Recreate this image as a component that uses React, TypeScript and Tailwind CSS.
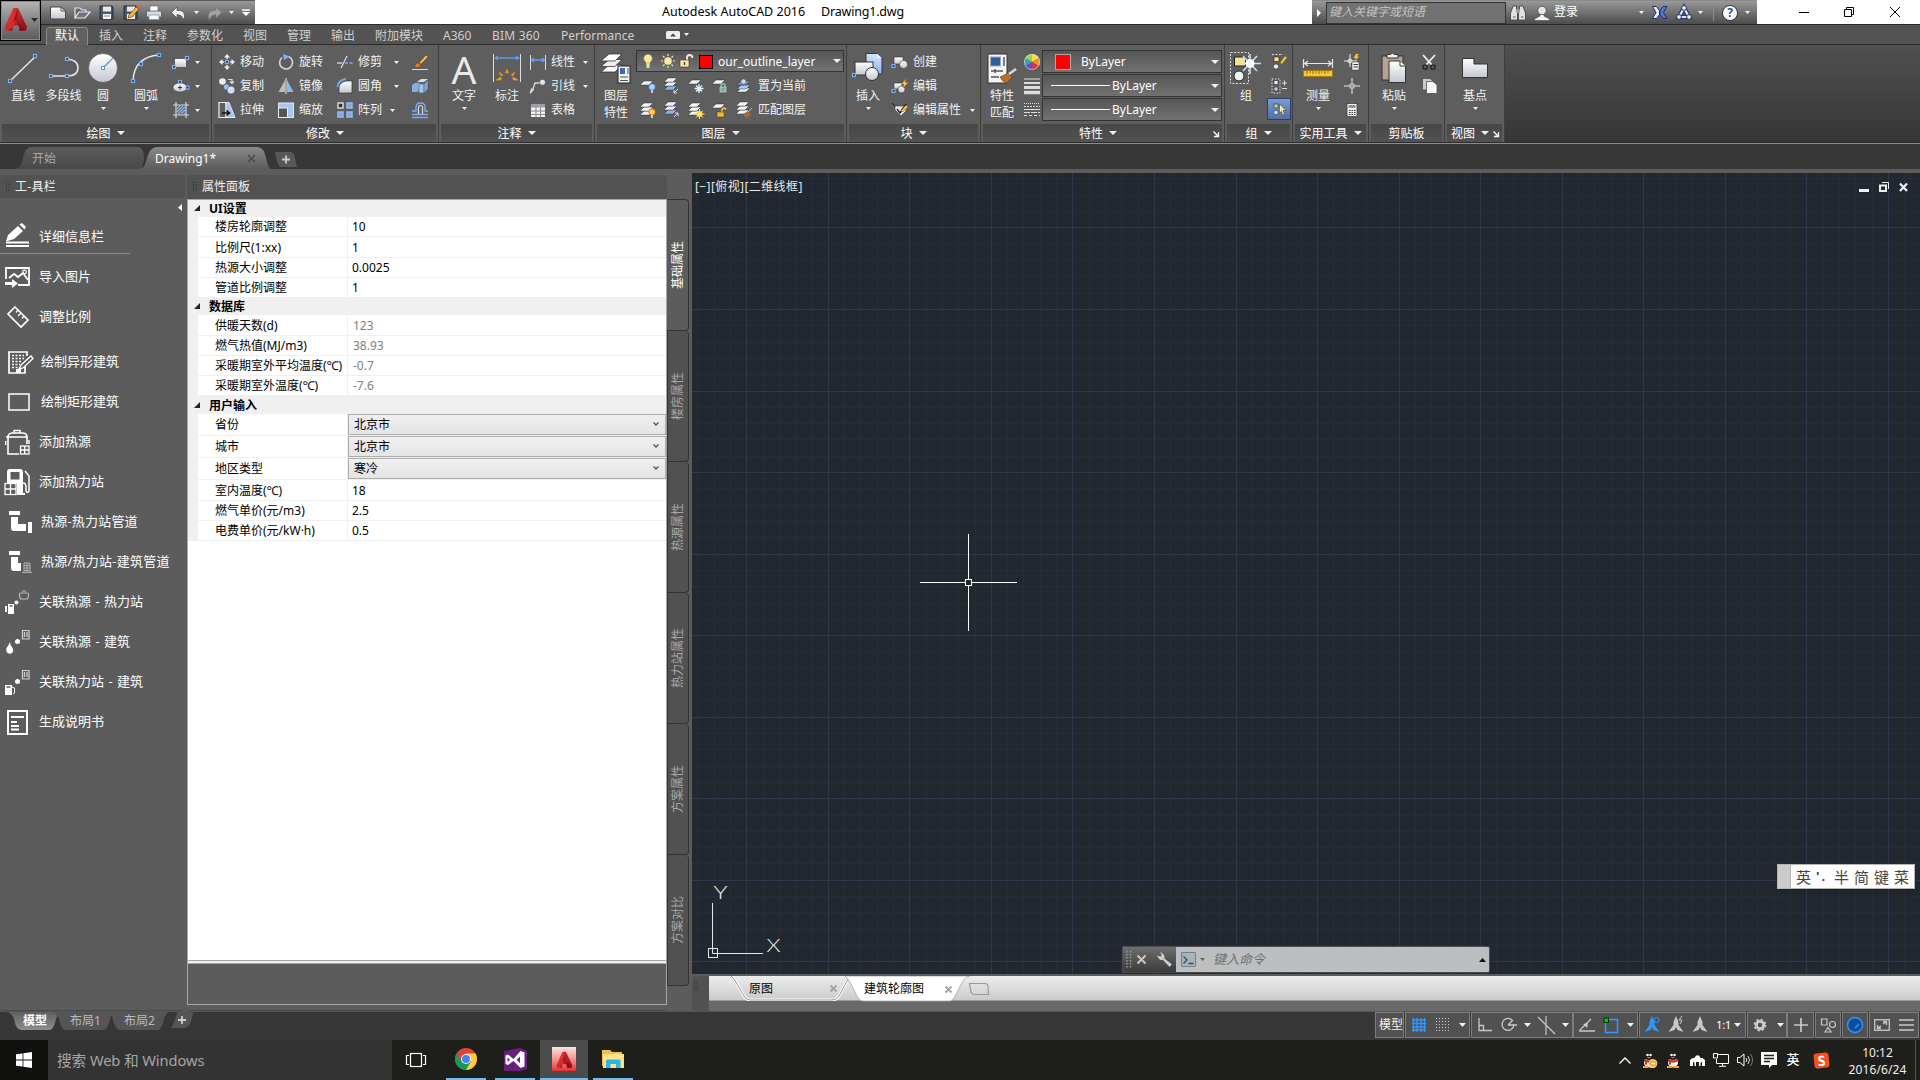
import React from "react";

type Kids = { children?: React.ReactNode };

/* ---------- shared primitives ---------- */

function Svg({ w, h, children }: { w: number; h: number } & Kids) {
  return (
    <svg width={w} height={h} viewBox={`0 0 ${w} ${h}`} fill="none" className="block shrink-0 overflow-visible">
      {children}
    </svg>
  );
}

function Caret({ s = 5, c = "#f0f0f0" }: { s?: number; c?: string }) {
  const h = Math.ceil(s / 2);
  return (
    <Svg w={s} h={h}>
      <path d={`M0 0H${s}L${s / 2} ${h}Z`} fill={c} />
    </Svg>
  );
}

function Cell({ cls, children }: { cls: string } & Kids) {
  return <div className={`flex h-full shrink-0 items-center justify-center ${cls}`}>{children}</div>;
}

const Node = ({ x, y }: { x: number; y: number }) => (
  <rect x={x - 1.5} y={y - 1.5} width="3" height="3" fill="#2d3c5c" stroke="#79aef8" strokeWidth="1.2" />
);

const Sheet = ({ x, y, f = "#f4f5f7" }: { x: number; y: number; f?: string }) => (
  <path d={`M${x + 4} ${y}H${x + 13}L${x + 9} ${y + 4}H${x}Z`} fill={f} stroke="#333" strokeWidth=".5" />
);

function Gradients() {
  return (
    <svg width="0" height="0" className="absolute">
      <defs>
        <linearGradient id="metal" x1="0" y1="0" x2="0" y2="1">
          <stop offset="0" stopColor="#ffffff" />
          <stop offset="1" stopColor="#c3c7d0" />
        </linearGradient>
        <linearGradient id="blueSheet" x1="0" y1="0" x2="0" y2="1">
          <stop offset="0" stopColor="#d5e6fb" />
          <stop offset="1" stopColor="#8fb4ea" />
        </linearGradient>
        <linearGradient id="tabIdle" x1="0" y1="0" x2="0" y2="1">
          <stop offset="0" stopColor="#5c5c5c" />
          <stop offset="1" stopColor="#484848" />
        </linearGradient>
        <linearGradient id="tabActive" x1="0" y1="0" x2="0" y2="1">
          <stop offset="0" stopColor="#8a8a8a" />
          <stop offset="1" stopColor="#5c5c5c" />
        </linearGradient>
        <linearGradient id="modelTab" x1="0" y1="0" x2="0" y2="1">
          <stop offset="0" stopColor="#606060" />
          <stop offset="1" stopColor="#8d8d8d" />
        </linearGradient>
        <linearGradient id="logoRed" x1="0" y1="0" x2="1" y2="1">
          <stop offset="0" stopColor="#e8383a" />
          <stop offset="1" stopColor="#8c0d12" />
        </linearGradient>
      </defs>
    </svg>
  );
}

/* ---------- title bar ---------- */

const AutocadA = ({ s }: { s: number }) => (
  <svg width={s} height={s} viewBox="0 0 24 24" className="block shrink-0">
    <path d="M9.5 1H14L23 20L22 23.5L15.5 24L15 19.5Q12 17 9 19.5L8.5 24L2 23.5L1 20Z" fill="url(#logoRed)" />
    <path d="M9.5 1L12.5 13L9 19.5L2 23.5L1 20Z" fill="#e23133" opacity=".7" />
    <path d="M14 1L12.5 13L1 20L9 15Z" fill="#7d0a10" opacity=".7" />
    <path d="M12.5 13L22 23.5L15.5 24L15 19.5Z" fill="#7d0a10" opacity=".6" />
  </svg>
);

const FloppyShape = () => (
  <>
    <path d="M1 1H13L14 2V14H1Z" fill="#4d5866" stroke="#232a33" />
    <rect x="4" y="1.5" width="8" height="5" fill="#e6e9ee" />
    <rect x="4" y="9" width="8" height="5" fill="#f4f5f7" />
    <path d="M5 11H11" stroke="#7a8799" />
  </>
);

function QuickAccess() {
  return (
    <div className="flex h-6 w-[255px] shrink-0 items-center border-t border-[#5a5a5a] bg-gradient-to-b from-[#999] to-[#505050] pl-[46px]">
      <Cell cls="w-6">
        <Svg w={16} h={14}><path d="M.5 1H11L15.5 5V13H.5Z" fill="url(#metal)" stroke="#444" /><path d="M11 1V5H15.5" stroke="#555" /></Svg>
      </Cell>
      <Cell cls="w-6">
        <Svg w={17} h={13}><path d="M1 12V2H6L8 4H12V6" fill="#5e6875" stroke="#e6e6e6" strokeWidth="1.2" /><path d="M1 12L5 6H16L11 12Z" fill="#6d7682" stroke="#e6e6e6" strokeWidth="1.2" /></Svg>
      </Cell>
      <Cell cls="w-6"><Svg w={15} h={15}><FloppyShape /></Svg></Cell>
      <Cell cls="w-6">
        <Svg w={15} h={15}><FloppyShape /><path d="M6 10L13 2L16 4L9 12L5 13Z" fill="#f3b94a" stroke="#6b4308" strokeWidth=".7" /><path d="M13 2L15 .5L17.500 2.500L16 4Z" fill="#e2564a" /></Svg>
      </Cell>
      <Cell cls="w-6">
        <Svg w={16} h={14}><rect x="4" y="0" width="8" height="6" fill="#fff" stroke="#666" strokeWidth=".6" /><rect x=".5" y="5" width="15" height="6" rx="1" fill="#d7dade" stroke="#555" strokeWidth=".8" /><rect x="3" y="9" width="10" height="4.500" fill="#f4f8ff" stroke="#7690b5" strokeWidth=".7" /></Svg>
      </Cell>
      <Cell cls="w-6">
        <Svg w={15} h={12}><path d="M6 0V3.500H9Q14 4 13.500 11.500H11.500Q11.500 8 6 7.500V11L.5 5.500Z" fill="#f1f3f5" stroke="#4a4a4a" strokeWidth=".6" /></Svg>
      </Cell>
      <Cell cls="w-[12px]"><Caret /></Cell>
      <Cell cls="w-6">
        <Svg w={15} h={12}><path d="M9 0V3.500H6Q1 4 1.500 11.500H3.500Q3.500 8 9 7.500V11L14.500 5.500Z" fill="#a3a3a3" stroke="#777" strokeWidth=".6" /></Svg>
      </Cell>
      <Cell cls="w-[10px]"><Caret /></Cell>
      <Cell cls="w-[20px]"><Svg w={8} h={7}><path d="M0 1H8" stroke="#fff" strokeWidth="1.500" /><path d="M0 3H8L4 7Z" fill="#fff" /></Svg></Cell>
    </div>
  );
}

function InfoCenter() {
  return (
    <div className="flex h-6 w-[445px] shrink-0 items-center border-t border-[#8a8a8a] bg-gradient-to-b from-[#999] to-[#4c4c4c]">
      <Cell cls="w-[14px]"><Svg w={4} h={8}><path d="M0 0L4 4L0 8Z" fill="#fff" /></Svg></Cell>
      <div className="flex h-[22px] w-[180px] items-center border border-[#333] bg-[#727272] pl-[2px] text-[12px] italic text-[#c4c4c4]">键入关键字或短语</div>
      <Cell cls="w-[24px]">
        <Svg w={16} h={15}><path d="M3 1H6.500V4L7.500 8V15H.5V8L2 4ZM9.500 1H13L14 4L15.500 8V15H8.500V8L9.500 4Z" fill="#dfe2e6" stroke="#3a3a3a" strokeWidth=".8" /><path d="M6.500 4H9.500V8H6.500Z" fill="#9aa0a8" /><path d="M3 12H5.500M11 12H13.500" stroke="#555" /></Svg>
      </Cell>
      <Cell cls="w-[23px]">
        <Svg w={16} h={16}><circle cx="8" cy="5.500" r="4.300" fill="#e3e5e8" stroke="#444" strokeWidth=".8" /><path d="M6 9.500H10V11L15.500 14V15.500H.5V14L6 11Z" fill="#f3f3f3" stroke="#444" strokeWidth=".6" /></Svg>
      </Cell>
      <div className="ml-px w-[82px] text-[12px] text-white">登录</div>
      <Cell cls="w-[10px]"><Caret /></Cell>
      <Cell cls="w-[27px]">
        <Svg w={16} h={13}><path d="M.5 .5H4.500L7.500 4.500V8.500L4.500 12.500H.5L4 6.500Z" fill="#e8ecf5" stroke="#1d2f6b" /><path d="M15 .5H11L8 4.500V8.500L11 12.500H15L11.500 6.500Z" fill="#4f78d8" stroke="#1d2f6b" /></Svg>
      </Cell>
      <Cell cls="w-[22px]">
        <Svg w={16} h={15}><path d="M8 3L3 12H13Z" stroke="#28336b" strokeWidth="4.500" /><path d="M8 3L3 12H13Z" stroke="#e3e6ef" strokeWidth="2.200" /><circle cx="8" cy="3" r="2.400" fill="#eef" stroke="#28336b" /><circle cx="3" cy="12" r="2.400" fill="#eef" stroke="#28336b" /><circle cx="13" cy="12" r="2.400" fill="#eef" stroke="#28336b" /></Svg>
      </Cell>
      <Cell cls="w-[10px]"><Caret /></Cell>
      <div className="mx-[8px] h-[17px] w-px bg-[#8c8c8c]" />
      <div className="flex size-4 shrink-0 items-center justify-center rounded-full border border-[#333] bg-white text-[12px] font-bold leading-none text-[#1d4fbf]">?</div>
      <Cell cls="w-[18px]"><Caret /></Cell>
    </div>
  );
}

function TitleBar() {
  return (
    <div className="flex h-6 w-full bg-white">
      <QuickAccess />
      <div className="flex h-[23px] grow items-center pl-[407px]">
        <span className="whitespace-pre text-[12.500px] text-black">Autodesk AutoCAD 2016</span>
        <span className="ml-[16px] text-[12.500px] tracking-[-.2px] text-black">Drawing1.dwg</span>
      </div>
      <InfoCenter />
      <div className="flex h-[23px] w-[163px] items-center text-black">
        <div className="ml-[42px]"><Svg w={10} h={10}><path d="M0 5.500H10" stroke="#000" /></Svg></div>
        <div className="ml-[35px]"><Svg w={10} h={10}><path d="M.5 2.500H7.500V9.500H.5ZM2.500 2.500V.5H9.500V7.500H7.500" stroke="#000" /></Svg></div>
        <div className="ml-[36px]"><Svg w={10} h={10}><path d="M0 0L10 10M10 0L0 10" stroke="#000" /></Svg></div>
      </div>
    </div>
  );
}

/* ---------- ribbon tabs ---------- */

const ribbonTabs: { label: string; cls: string }[] = [
  { label: "插入", cls: "w-[44px]" },
  { label: "注释", cls: "w-[44px]" },
  { label: "参数化", cls: "w-[56px]" },
  { label: "视图", cls: "w-[44px]" },
  { label: "管理", cls: "w-[44px]" },
  { label: "输出", cls: "w-[44px]" },
  { label: "附加模块", cls: "w-[68px]" },
  { label: "A360", cls: "w-[49px]" },
  { label: "BIM 360", cls: "w-[69px] tracking-[.2px]" },
  { label: "Performance", cls: "w-[105px]" },
];

function RibbonTabs() {
  return (
    <div className="flex h-[21px] w-full items-end border-y border-[#2a2a2a] bg-[#535353] pl-[46px] text-[12px] text-[#cfcfcf]">
      <div className="-mb-px flex h-[18px] w-[42px] items-center justify-center rounded-t-sm border border-b-0 border-[#8c8c8c] bg-[#606060] text-white">默认</div>
      <div className="ml-[11px] flex h-[19px] items-center">
        {ribbonTabs.map((t) => (
          <div key={t.label} className={`shrink-0 whitespace-nowrap pt-[3px] ${t.cls}`}>{t.label}</div>
        ))}
        <Svg w={14} h={8}><rect width="14" height="8" rx="1.500" fill="#ececec" /><path d="M4 5.500H10L7 2.500Z" fill="#444" /></Svg>
        <div className="ml-[4px]"><Caret /></div>
      </div>
    </div>
  );
}

/* ---------- ribbon building blocks ---------- */

function Panel({ w, title, caret = true, launcher = false, children }: { w: string; title: string; caret?: boolean; launcher?: boolean } & Kids) {
  return (
    <div className={`flex h-full shrink-0 flex-col border-r border-[#3f3f3f] bg-[#5e5e5e] ${w}`}>
      <div className="flex h-[79px] pt-[5px]">{children}</div>
      <div className="mx-[2px] flex h-[18px] items-center bg-gradient-to-b from-[#474747] to-[#525252] text-[12px] text-white">
        <div className="flex grow items-center justify-center gap-[6px]">
          <span className="pt-[2px]">{title}</span>
          {caret && <Caret s={8} />}
        </div>
        {launcher && (
          <div className="mr-[3px] mt-[2px]"><Svg w={6} h={6}><path d="M.5 .5L5 5M5.500 1V5.500H1" stroke="#fff" strokeWidth="1.300" /></Svg></div>
        )}
      </div>
    </div>
  );
}

function Big({ w, label, label2, caret = false, children }: { w: string; label: string; label2?: string; caret?: boolean } & Kids) {
  return (
    <div className={`flex shrink-0 flex-col items-center text-[12px] leading-[17px] text-[#f2f2f2] ${w}`}>
      <div className="flex h-[36px] w-full items-center justify-center">{children}</div>
      <div className="mt-px whitespace-nowrap">{label}</div>
      {label2 && <div className="whitespace-nowrap">{label2}</div>}
      {caret && <div className="mt-[3px]"><Caret /></div>}
    </div>
  );
}

function Row({ label, caret = "", children }: { label?: string; caret?: string } & Kids) {
  return (
    <div className="flex h-6 items-center text-[12px] text-[#f2f2f2]">
      <div className="flex w-[18px] shrink-0 items-center justify-center">{children}</div>
      {label && <div className="ml-[4px] whitespace-nowrap pt-px">{label}</div>}
      {caret && <div className={caret}><Caret /></div>}
    </div>
  );
}

const PanelDraw = () => (
  <Panel w="w-[212px]" title="绘图">
    <Big w="w-[46px]" label="直线">
      <Svg w={30} h={30}><path d="M2 28L28 3" stroke="#e8e8e8" strokeWidth="1.500" /><Node x={2} y={28} /><Node x={27} y={3} /></Svg>
    </Big>
    <Big w="w-[35px]" label="多段线">
      <Svg w={30} h={22}><path d="M2 19H18Q29 19 29 10.500Q29 3 18 2" stroke="#e8e8e8" strokeWidth="1.500" /><Node x={2} y={19} /><Node x={18} y={19} /><Node x={18} y={2} /></Svg>
    </Big>
    <Big w="w-[44px]" label="圆" caret>
      <Svg w={30} h={30}><circle cx="15" cy="15" r="14.500" fill="url(#metal)" stroke="#444" strokeWidth=".6" /><path d="M15 15L25 5" stroke="#5b95e8" strokeWidth="1.200" /><rect x="13.500" y="13.500" width="3" height="3" fill="#fff" stroke="#5b95e8" /></Svg>
    </Big>
    <Big w="w-[42px]" label="圆弧" caret>
      <Svg w={30} h={30}><path d="M2 28Q3 4 28 2" stroke="#e8e8e8" strokeWidth="1.500" /><Node x={2} y={28} /><Node x={10} y={11} /><Node x={28} y={2} /></Svg>
    </Big>
    <div className="ml-[5px]">
      <Row caret="ml-[5px]"><Svg w={16} h={13}><rect x="1.500" y="2.500" width="12" height="9" fill="url(#metal)" stroke="#333" strokeWidth=".6" /><Node x={1} y={11} /><Node x={14} y={2} /></Svg></Row>
      <Row caret="ml-[5px]"><Svg w={16} h={13}><ellipse cx="7" cy="7.500" rx="7" ry="4.500" fill="url(#metal)" stroke="#333" strokeWidth=".6" /><path d="M7 5.500V9.500M5 7.500H9" stroke="#333" /><Node x={7} y={2} /><Node x={14.500} y={7.500} /></Svg></Row>
      <Row caret="ml-[5px]"><Svg w={16} h={16}><path d="M3 0V16M0 3H16M0 13H16M13 0V16" stroke="#d8d8d8" strokeWidth="1.200" /><path d="M4 7L7 4M4 10L10 4M5 12L12 5M8 12L12 8M11 12.500L12 11" stroke="#8bb6f5" strokeWidth="1.200" /></Svg></Row>
    </div>
  </Panel>
);

const PanelModify = () => (
  <Panel w="w-[227px]" title="修改">
    <div className="ml-[6px] w-[58px]">
      <Row label="移动"><Svg w={16} h={16}><path d="M8 0L11 3.500H5ZM8 16L11 12.500H5ZM0 8L3.500 5V11ZM16 8L12.500 5V11Z" fill="#eee" /><path d="M8 3V5M8 11V13M3 8H5M11 8H13" stroke="#eee" strokeWidth="1.500" /><Node x={8} y={8} /></Svg></Row>
      <Row label="复制"><Svg w={16} h={16}><circle cx="3.500" cy="3.500" r="3.300" fill="#eee" /><circle cx="7.500" cy="9" r="3" fill="#a9c8f5" stroke="#444" strokeWidth=".6" /><circle cx="12" cy="12" r="4" fill="#cfe0f8" stroke="#444" strokeWidth=".6" /><path d="M9 1.500H13V5M11 3.500L13 5.500L15 3.500" stroke="#ddd" strokeWidth="1.200" /></Svg></Row>
      <Row label="拉伸"><Svg w={16} h={16}><path d="M0 .5H7V15.500H0Z" stroke="#eee" strokeWidth="1.200" /><path d="M7 .5H10L16 15.500H7Z" fill="#a9c4ea" stroke="#dfe9f8" /><path d="M3 11H10M7.500 8.500L10.500 11L7.500 13.500" stroke="#111" strokeWidth="1.600" /></Svg></Row>
    </div>
    <div className="w-[60px] pl-px">
      <Row label="旋转"><Svg w={16} h={16}><path d="M4 3.500A6.500 6.500 0 1 0 10.500 2.500" stroke="#d8d8d8" strokeWidth="1.600" /><path d="M5 0L12 2.500L6 6Z" fill="#7db0f8" /></Svg></Row>
      <Row label="镜像"><Svg w={16} h={16}><path d="M7 2V14H.5Z" fill="#b9bcc2" /><path d="M9 2V14H15.500Z" fill="#8fb6ee" /><path d="M8 0V16" stroke="#eee" /></Svg></Row>
      <Row label="缩放"><Svg w={16} h={16}><rect x=".5" y="1" width="15" height="14.500" fill="#a9c6f1" stroke="#dfe9f8" /><path d="M.5 6H9.500V15.500H.5Z" fill="#555" stroke="#eee" /></Svg></Row>
    </div>
    <div className="w-[74px]">
      <Row label="修剪" caret="ml-[12px]"><Svg w={16} h={14}><path d="M0 8H5" stroke="#ddd" strokeWidth="1.300" /><path d="M8 8H16" stroke="#79aef8" strokeWidth="1.300" strokeDasharray="3 1.500" /><path d="M4 13L10 1" stroke="#ddd" strokeWidth="1.300" /></Svg></Row>
      <Row label="圆角" caret="ml-[12px]"><Svg w={16} h={16}><path d="M2 15V9Q3 4 9 3H15V15Z" fill="url(#metal)" stroke="#333" strokeWidth=".7" /><path d="M.5 9Q1 2 9 1" stroke="#6fa6f5" strokeWidth="1.800" /></Svg></Row>
      <Row label="阵列" caret="ml-[8px]"><Svg w={16} h={16}><rect x="1" y="1" width="5" height="5" fill="#333" stroke="#eee" strokeWidth="1.300" /><path d="M10 1H15V6H10ZM1 10H6V15H1ZM10 10H15V15H10Z" fill="#8aa3cf" stroke="#8fbcff" strokeWidth="1.500" /></Svg></Row>
    </div>
    <div className="ml-px">
      <Row><Svg w={16} h={16}><path d="M0 15.500H16" stroke="#ddd" /><path d="M7 9L14 1L16 3L9 10Z" fill="#f0c350" stroke="#5a3a08" strokeWidth=".5" /><path d="M3 14Q2 10 6 8.500L9 11Q8 14 3 14Z" fill="#e07820" stroke="#5a2a08" strokeWidth=".5" /></Svg></Row>
      <Row><Svg w={16} h={14}><path d="M0 6L3 4H8V11L5 13H0Z" fill="#86aee0" /><path d="M5 3L9 0H16L12 3Z" fill="#cfe0f5" /><path d="M7 5H12V14H7Z" fill="#a4c3ea" stroke="#555" strokeWidth=".5" /><path d="M12 5L16 1V10L12 14Z" fill="#7fa6dc" stroke="#555" strokeWidth=".5" /></Svg></Row>
      <Row><Svg w={16} h={16}><path d="M0 15.500H16" stroke="#79aef8" strokeWidth="1.400" /><path d="M0 12.500H16M0 9H4V5Q4 1 8.500 1Q13 1 13 5V9H16" stroke="#79aef8" strokeWidth="1.300" /><path d="M6.500 12V5.500Q6.500 3.500 8.500 3.500Q10.500 3.500 10.500 5.500V12" stroke="#ddd" strokeWidth="1.200" /></Svg></Row>
    </div>
  </Panel>
);

const PanelAnnotate = () => (
  <Panel w="w-[156px]" title="注释">
    <Big w="w-[50px]" label="文字" caret>
      <span className="mt-[2px] text-[39px] leading-[36px] text-[#e9e9e9]">A</span>
    </Big>
    <Big w="w-[36px]" label="标注">
      <Svg w={28} h={30}><path d="M.5 1V29M27.500 1V29" stroke="#ddd" /><path d="M2 5H26" stroke="#5f9ff5" strokeWidth="1.400" /><path d="M1 5L5 2.500V7.500ZM27 5L23 2.500V7.500Z" fill="#5f9ff5" /><path d="M14 16L15.500 20H12.500ZM6 19L10 22L8 23ZM22 19L18 22L20 23ZM3 27L8 24V27ZM25 27L20 24V27Z" fill="#f7c33c" stroke="#e07b1b" strokeWidth=".9" /></Svg>
    </Big>
    <div className="ml-[4px]">
      <Row label="线性" caret="ml-[8px]"><Svg w={16} h={15}><path d="M.5 0V15M15.500 0V15" stroke="#ddd" /><path d="M1 5H15M4 3L1.500 5L4 7M12 3L14.500 5L12 7" stroke="#5f9ff5" strokeWidth="1.400" /></Svg></Row>
      <Row label="引线" caret="ml-[8px]"><Svg w={16} h={15}><path d="M0 14L3 10L5 4H10" stroke="#ddd" strokeWidth="1.300" /><path d="M0 15L1 9L4 11Z" fill="#ddd" /><circle cx="12.500" cy="3.500" r="3" fill="url(#metal)" stroke="#333" strokeWidth=".5" /></Svg></Row>
      <Row label="表格"><Svg w={16} h={15}><rect x=".5" y=".5" width="15" height="14" fill="#f2f2f2" stroke="#333" strokeWidth=".6" /><rect x="1" y="1" width="14" height="3.500" fill="#9aa0a8" /><path d="M1 8H15M1 11.500H15M6 4V14M10.500 4V14" stroke="#8a8a8a" /></Svg></Row>
    </div>
  </Panel>
);

const LayerRow = ({ icons, label }: { icons: React.ReactNode[]; label: string }) => (
  <div className="flex h-6 items-center text-[12px] text-[#f2f2f2]">
    {icons.map((n, i) => (
      <div key={i} className="flex w-6 justify-center">{n}</div>
    ))}
    <div className="ml-[2px] whitespace-nowrap pt-px">{label}</div>
  </div>
);

const PanelLayers = () => (
  <Panel w="w-[252px]" title="图层">
    <Big w="w-[42px]" label="图层" label2="特性">
      <Svg w={30} h={30}>
        <path d="M8 12H21L14 19H0Z" fill="#fff" stroke="#333" strokeWidth=".8" />
        <path d="M8 6.500H21L14 13.500H0Z" fill="#eee" stroke="#333" strokeWidth=".8" />
        <path d="M8 1H21L14 8H0Z" fill="#fff" stroke="#333" strokeWidth=".8" />
        <rect x="17" y="13" width="12" height="17" fill="#f2f2f2" stroke="#222" />
        <rect x="19" y="15" width="5" height="6" fill="#3c6bb0" /><path d="M27 15V21M19 24H27M19 27.500H27" stroke="#555" />
      </Svg>
    </Big>
    <div className="-ml-px">
      <div className="mb-[2px] flex h-[22px] w-[208px] items-center border border-[#333] bg-gradient-to-b from-[#555] to-[#737373] text-[12px] text-white">
        <Cell cls="w-[22px]"><Svg w={10} h={15}><circle cx="5" cy="4.500" r="4.300" fill="#fbe7a0" stroke="#8b7a3a" strokeWidth=".6" /><path d="M3 8H7V11H3Z" fill="#e8cf80" /><path d="M3.500 11H6.500V14H3.500Z" fill="#ddd" /></Svg></Cell>
        <Cell cls="w-[17px]"><Svg w={14} h={14}><circle cx="7" cy="7" r="3.800" fill="#fbe7a0" /><path d="M7 0V2M7 12V14M0 7H2M12 7H14M2 2L3.500 3.500M12 12L10.500 10.500M2 12L3.500 10.500M12 2L10.500 3.500" stroke="#f3e6b8" strokeWidth="1.200" /></Svg></Cell>
        <Cell cls="w-[20px]"><Svg w={15} h={14}><path d="M8 6V3.500Q8 1 10.500 1Q13.500 1 13.500 4" stroke="#f5efd0" strokeWidth="1.800" /><rect x="1" y="6" width="9" height="7" fill="#fbe9a6" stroke="#333" strokeWidth=".6" /><path d="M5.500 8V11" stroke="#333" strokeWidth="1.300" /></Svg></Cell>
        <div className="ml-[3px] mt-[2px] size-[14px] border border-black bg-[#f00]" />
        <span className="ml-[5px] grow pt-[2px]">our_outline_layer</span>
        <div className="mr-[2px]"><Caret s={8} /></div>
      </div>
      <LayerRow
        label="置为当前"
        icons={[
          <Svg w={16} h={14}><Sheet x={0} y={2} /><circle cx="12" cy="8" r="3.200" fill="#a5d3f8" stroke="#3d7fc0" strokeWidth=".7" /><path d="M12 11V14" stroke="#ccc" strokeWidth="2" /></Svg>,
          <Svg w={16} h={16}><Sheet x={0} y={8} f="#8cb7f2" /><Sheet x={0} y={4} /><Sheet x={0} y={0} /><path d="M14 11L10 15M10 12V15H13" stroke="#ddd" /></Svg>,
          <Svg w={16} h={14}><Sheet x={0} y={1} /><path d="M11 5V14M6.500 9.500H15.500M8 6.500L14 12.500M14 6.500L8 12.500" stroke="#dff0ff" strokeWidth="1.300" /></Svg>,
          <Svg w={16} h={14}><Sheet x={0} y={1} /><path d="M9 8V6Q11 3.500 13 6V8" stroke="#9dbcc0" strokeWidth="1.300" /><rect x="8" y="8" width="6" height="5" fill="#7fb0a8" stroke="#ddd" strokeWidth=".6" /></Svg>,
          <Svg w={16} h={16}><Sheet x={1} y={10} /><Sheet x={1} y={7} f="#a9cdf5" /><Sheet x={1} y={3} f="#6f9fe0" /><circle cx="7.500" cy="3.500" r="2.600" fill="#ddd" stroke="#444" strokeWidth=".6" /></Svg>,
        ]}
      />
      <LayerRow
        label="匹配图层"
        icons={[
          <Svg w={16} h={15}><Sheet x={0} y={8} /><Sheet x={0} y={4} /><Sheet x={0} y={0} /><circle cx="12" cy="9" r="3.200" fill="#ffd257" stroke="#e0701a" strokeWidth="1" /><path d="M12 12V15" stroke="#ccc" strokeWidth="2" /></Svg>,
          <Svg w={16} h={16}><Sheet x={0} y={8} f="#8cb7f2" /><Sheet x={0} y={4} /><Sheet x={0} y={0} /><path d="M10 15L14 11M11 11H14V14" stroke="#ddd" /></Svg>,
          <Svg w={16} h={15}><Sheet x={0} y={8} /><Sheet x={0} y={4} /><Sheet x={0} y={0} /><circle cx="11.500" cy="11" r="3" fill="#ffe24a" /><path d="M11.500 6V16M6.500 11H16.500M8 7.500L15 14.500M15 7.500L8 14.500" stroke="#ffe24a" /></Svg>,
          <Svg w={16} h={14}><Sheet x={0} y={1} /><path d="M10 9V6.500Q12 3.500 14 6.500" stroke="#ffc94a" strokeWidth="1.400" /><rect x="5" y="9" width="7" height="5" fill="#f2b632" stroke="#6a4708" strokeWidth=".6" /></Svg>,
          <Svg w={16} h={16}><Sheet x={0} y={8} /><Sheet x={0} y={4} /><Sheet x={0} y={0} /><path d="M7 12L12 9L15 12L11 16Q8 15 7 12Z" fill="#a9683a" /><path d="M12 10L16 6" stroke="#bbb" /></Svg>,
        ]}
      />
    </div>
  </Panel>
);

const PanelBlock = () => (
  <Panel w="w-[134px]" title="块">
    <Big w="w-[42px]" label="插入" caret>
      <Svg w={32} h={30}><path d="M14 .5H25L30 5V21H14Z" fill="url(#blueSheet)" stroke="#333" /><path d="M25 .5V5H30" fill="#eef" /><rect x="3" y="9" width="18" height="13" fill="url(#metal)" stroke="#333" /><circle cx="20" cy="21" r="6.500" fill="url(#metal)" stroke="#333" /><Node x={2} y={22} /></Svg>
    </Big>
    <div className="ml-[2px]">
      <Row label="创建"><Svg w={16} h={13}><rect x="2" y="1" width="9" height="7" fill="url(#metal)" stroke="#333" strokeWidth=".6" /><circle cx="11.500" cy="8.500" r="4" fill="url(#metal)" stroke="#333" strokeWidth=".6" /><Node x={1.500} y={10} /></Svg></Row>
      <Row label="编辑"><Svg w={16} h={14}><rect x="2" y="4" width="8" height="6" fill="url(#metal)" stroke="#333" strokeWidth=".6" /><circle cx="9.500" cy="10.500" r="3.500" fill="url(#metal)" stroke="#333" strokeWidth=".6" /><Node x={1.500} y={12} /><path d="M14 0L9.500 5H12L11 9L16 3.500H13Z" fill="#ffd24a" stroke="#c9681a" strokeWidth=".5" /></Svg></Row>
      <Row label="编辑属性" caret="ml-[9px]"><Svg w={16} h={14}><path d="M0 0L3 3" stroke="#111" /><path d="M3 3H14V8L9 13L3 7Z" fill="#eee" stroke="#333" strokeWidth=".6" /><path d="M5 6L8 10L14 1" stroke="#222" strokeWidth="1.500" /><path d="M9 8L14 2L16 4L11 9Z" fill="#f0c04a" stroke="#a33" strokeWidth=".4" /></Svg></Row>
    </div>
  </Panel>
);

const Combo = ({ children }: Kids) => (
  <div className="mb-px flex h-[23px] w-[180px] items-center border border-[#333] bg-gradient-to-b from-[#565656] to-[#727272] text-[12px] text-white">
    {children}
    <div className="ml-auto mr-[2px]"><Caret s={8} /></div>
  </div>
);

const PanelProps = () => (
  <Panel w="w-[244px]" title="特性" launcher>
    <Big w="w-[42px]" label="特性" label2="匹配">
      <Svg w={30} h={30}><path d="M1 1H20V30H1Z" fill="#f4f4f4" stroke="#333" /><rect x="3.500" y="4" width="10" height="9" fill="#2f5f9f" stroke="#9ab" /><path d="M17 4V13M4 18H16M8 16V20M4 24H12" stroke="#555" strokeWidth="1.500" /><path d="M13 24L21 20L25 24L20 30Q15 29 13 24Z" fill="#b5712e" stroke="#5a330e" strokeWidth=".5" /><path d="M22 21L29 16" stroke="#d8d8d8" strokeWidth="2.500" /></Svg>
    </Big>
    <div className="w-[19px]">
      <Row>
        <Svg w={16} h={16}>
          <path d="M8 8L8 0A8 8 0 0 1 14.900 4Z" fill="#f3e04a" /><path d="M8 8L14.900 4A8 8 0 0 1 14.900 12Z" fill="#f0922e" /><path d="M8 8L14.900 12A8 8 0 0 1 8 16Z" fill="#d8354a" />
          <path d="M8 8L8 16A8 8 0 0 1 1.100 12Z" fill="#5a4fd0" /><path d="M8 8L1.100 12A8 8 0 0 1 1.100 4Z" fill="#3aa0b0" /><path d="M8 8L1.100 4A8 8 0 0 1 8 0Z" fill="#9ad05a" /><circle cx="8" cy="8" r="7.500" stroke="#ddd" strokeWidth=".7" />
        </Svg>
      </Row>
      <Row><Svg w={16} h={16}><path d="M0 1H16" stroke="#ddd" /><path d="M0 5H16" stroke="#ddd" strokeWidth="2" /><path d="M0 9.500H16" stroke="#ddd" strokeWidth="3" /><path d="M0 14.500H16" stroke="#ddd" strokeWidth="3.500" /></Svg></Row>
      <Row><Svg w={16} h={14}><path d="M0 .5H16" stroke="#ddd" strokeDasharray="1 1" /><path d="M0 3.500H16" stroke="#ddd" strokeDasharray="2 1" /><path d="M0 6.500H16" stroke="#ddd" /><path d="M0 9.500H16" stroke="#ddd" strokeDasharray="6 1" /><path d="M0 12.500H16" stroke="#ddd" strokeDasharray="3 2" /></Svg></Row>
    </div>
    <div>
      <Combo><div className="ml-[12px] size-4 border border-[#aaa] bg-[#f00]" /><span className="ml-[10px] pt-[2px]">ByLayer</span></Combo>
      <Combo><div className="ml-[8px] h-px w-[59px] bg-white" /><span className="ml-[2px] pt-[2px]">ByLayer</span></Combo>
      <Combo><div className="ml-[8px] h-px w-[59px] bg-white" /><span className="ml-[2px] pt-[2px]">ByLayer</span></Combo>
    </div>
  </Panel>
);

const PanelGroup = () => (
  <Panel w="w-[68px]" title="组">
    <Big w="w-[42px]" label="组">
      <Svg w={32} h={32}><rect x=".5" y=".5" width="18" height="31" stroke="#ddd" strokeDasharray="2 1.500" /><rect x="4.500" y="5" width="11" height="9" fill="#f2e48a" stroke="#222" /><circle cx="9" cy="24" r="5" fill="#eef3f8" stroke="#222" /><path d="M20 2V22M10 11.500H31M13 4L27 19M27 4L13 19" stroke="#bfe0ff" strokeWidth="1.600" /><circle cx="20" cy="11.500" r="4.500" fill="#fff" /></Svg>
    </Big>
    <div className="flex w-6 flex-col items-center">
      <Row><Svg w={16} h={16}><path d="M1 .5H12" stroke="#ddd" strokeDasharray="2 1.500" /><rect x="3" y="3" width="5" height="4.500" fill="#f2e48a" stroke="#222" strokeWidth=".6" /><circle cx="5" cy="12.500" r="2.500" fill="#eee" stroke="#222" strokeWidth=".5" /><path d="M9 9L14 2L16 3.500L11 10Z" fill="#f0d04a" stroke="#7a5a10" strokeWidth=".4" /></Svg></Row>
      <Row><Svg w={16} h={16}><rect x="1" y="1" width="8" height="14" stroke="#ddd" strokeDasharray="1.500 1.500" /><rect x="3" y="2.500" width="4" height="4" fill="#eee" stroke="#222" strokeWidth=".6" /><circle cx="5" cy="11" r="2.300" fill="#a9c8ee" stroke="#222" strokeWidth=".6" /><path d="M11 5H16M13.500 2.500V7.500M11 10.500H16" stroke="#ddd" /></Svg></Row>
      <div className="flex h-[22px] w-6 shrink-0 items-center justify-center border border-[#2b3f66] bg-gradient-to-b from-[#7b9bd8] to-[#54709f]">
        <Svg w={16} h={15}><rect x="1" y=".5" width="8" height="14" stroke="#4f86e8" strokeDasharray="1.500 1.500" /><rect x="3" y="2" width="4" height="4" fill="#d8c87a" stroke="#333" strokeWidth=".6" /><circle cx="5" cy="10.500" r="2.300" fill="#cfdcf0" stroke="#333" strokeWidth=".6" /><path d="M8.500 2L15 8.500H12L13.500 12.500L11.500 13L10.500 9.500L8.500 11Z" fill="#f7edaa" stroke="#333" strokeWidth=".5" /></Svg>
      </div>
    </div>
  </Panel>
);

const PanelUtil = () => (
  <Panel w="w-[76px]" title="实用工具">
    <Big w="w-[50px]" label="测量" caret>
      <Svg w={30} h={18}><path d="M.5 0V9M29.500 0V9M1 4.500H29M5 2L1.500 4.500L5 7M25 2L28.500 4.500L25 7" stroke="#e8e8e8" strokeWidth="1.200" /><rect x=".5" y="11.500" width="29" height="6" fill="#f0c83a" stroke="#a87a10" /><path d="M4 12V15M7 12V14M10 12V15M13 12V14M16 12V15M19 12V14M22 12V15M25 12V14" stroke="#6a4a08" strokeWidth=".7" /></Svg>
    </Big>
    <div>
      <Row><Svg w={16} h={16}><path d="M6 0V13M0 7H13" stroke="#eee" /><circle cx="6" cy="7" r="2" stroke="#eee" /><path d="M12 0L9.500 4H12L11 7L15 2.500H12.500L15 0Z" fill="#ffc23a" /><rect x="8" y="8" width="7" height="8" fill="#f4f4f4" stroke="#333" strokeWidth=".5" /><path d="M9.500 10.500H14M9.500 13H14" stroke="#333" /></Svg></Row>
      <Row><Svg w={16} h={16}><path d="M8 0V16M0 8H16" stroke="#eee" /><rect x="6" y="6" width="4" height="4" fill="#999" stroke="#ddd" strokeWidth=".7" /></Svg></Row>
      <Row><Svg w={12} h={14}><rect x="1" y=".5" width="10" height="13" fill="#f0f0f0" stroke="#333" strokeWidth=".7" /><rect x="2.500" y="2" width="7" height="3" fill="#8c939c" /><path d="M3 7.500H9.500M3 9.500H9.500M3 11.500H9.500" stroke="#333" strokeDasharray="1.500 1" /></Svg></Row>
    </div>
  </Panel>
);

const PanelClip = () => (
  <Panel w="w-[76px]" title="剪贴板" caret={false}>
    <Big w="w-[50px]" label="粘贴" caret>
      <Svg w={26} h={30}><rect x="1" y="3" width="21" height="24" fill="#b3a396" stroke="#333" /><path d="M6 1.500H9Q11.500 -1 14 1.500H17V5H6Z" fill="#eee" stroke="#333" /><path d="M8 8H19L24.500 13V29.500H8Z" fill="url(#metal)" stroke="#333" /><path d="M19 8V13H24.500" stroke="#333" fill="#fff" /></Svg>
    </Big>
    <div className="ml-px">
      <Row><Svg w={14} h={15}><path d="M1 0L10 10M13 0L4 10" stroke="#f0f0f0" strokeWidth="1.800" /><circle cx="3" cy="12" r="2.200" stroke="#222" strokeWidth="1.300" /><circle cx="11" cy="12" r="2.200" stroke="#222" strokeWidth="1.300" /></Svg></Row>
      <Row><Svg w={15} h={16}><path d="M.5 .5H8L11 3V12H.5Z" fill="#ccc" stroke="#444" strokeWidth=".7" /><path d="M4.500 3.500H11L15 7V15.500H4.500Z" fill="#f7f7f7" stroke="#444" strokeWidth=".7" /></Svg></Row>
    </div>
  </Panel>
);

const PanelView = () => (
  <Panel w="w-[60px]" title="视图" launcher>
    <Big w="w-[60px]" label="基点" caret>
      <Svg w={26} h={20}><path d="M.5 .5H12V6H25.500V19.500H.5Z" fill="url(#metal)" stroke="#333" /></Svg>
    </Big>
  </Panel>
);

function Ribbon() {
  return (
    <div className="flex h-[98px] w-full border-b border-[#2c2c2c] bg-gradient-to-b from-[#505050] to-[#363636]">
      <PanelDraw />
      <PanelModify />
      <PanelAnnotate />
      <PanelLayers />
      <PanelBlock />
      <PanelProps />
      <PanelGroup />
      <PanelUtil />
      <PanelClip />
      <PanelView />
    </div>
  );
}

/* ---------- document tabs ---------- */

function TabShape({ w, h, d, fill, children, pad }: { w: number; h: number; d: string; fill: string; pad: string } & Kids) {
  return (
    <div className={`relative flex shrink-0 items-center ${pad}`} style={{ width: w, height: h }}>
      <svg width={w} height={h} className="absolute left-0 top-0 overflow-visible"><path d={d} fill={fill} /></svg>
      <div className="relative flex w-full items-center">{children}</div>
    </div>
  );
}

function FileTabs() {
  return (
    <div className="flex h-[26px] w-full items-end border-t border-[#8c8c8c] bg-[#373737] pl-[16px] text-[12px]">
      <TabShape w={131} h={22} fill="url(#tabIdle)" pad="pl-[16px] pt-[2px]" d="M0 22Q5 21 7 11Q9 0 16 0H122Q128 0 128 12L126 22Z">
        <span className="text-[#a8a8a8]">开始</span>
      </TabShape>
      <TabShape w={124} h={22} fill="url(#tabActive)" pad="pl-[8px] pt-[2px]" d="M-7 22Q-2 21 0 11Q3 0 10 0H110Q117 0 119 11Q121 21 124 22Z">
        <span className="text-[12px] text-white">Drawing1*</span>
        <div className="ml-auto mr-[16px]"><Svg w={7} h={7}><path d="M0 0L7 7M7 0L0 7" stroke="#4a4a4a" strokeWidth="1.600" /></Svg></div>
      </TabShape>
      <div className="mb-[2px] ml-[4px]">
        <Svg w={22} h={15}><path d="M0 0H15Q19 0 20 6L22 15H5Q2 12 0 0Z" fill="#585858" /><path d="M7 7.500H15M11 3.500V11.500" stroke="#ccc" strokeWidth="1.800" /></Svg>
      </div>
    </div>
  );
}

/* ---------- tool palette ---------- */

const Grip = () => (
  <Svg w={4} h={9}><path d="M.5 0V9M3 0V9" stroke="#333" strokeDasharray="1 1" /></Svg>
);

const W = "#fff";
const toolIcons: Record<string, React.ReactNode> = {
  pen: <Svg w={24} h={24}><path d="M0 19.500H23M0 23H23" stroke={W} strokeWidth="1.800" /><path d="M0 18.500L2 12L12 3L17 8L8 16Z" fill={W} /><path d="M13.500 1.500L16 0L20 4L18.500 6.500Z" fill={W} /></Svg>,
  image: <Svg w={26} h={20}><path d="M1 12V1H24V18H13" stroke={W} strokeWidth="1.800" /><path d="M4 11L9 7L13 10L18 6L23 13" stroke={W} strokeWidth="1.800" /><circle cx="19.500" cy="5" r="1.800" stroke={W} strokeWidth="1.200" /><path d="M0 15H7V12L13 16.500L7 21V18H0Z" fill={W} /></Svg>,
  ruler: <Svg w={22} h={22}><path d="M8 1L21 14L14 21L1 8Z" stroke={W} strokeWidth="1.700" /><path d="M11 4L9 6.500M14 7L11 10M17 10L15 12.500" stroke={W} strokeWidth="1.300" /></Svg>,
  gridpen: <Svg w={25} h={23}><path d="M17 12V22H1V1H19V5" stroke={W} strokeWidth="1.700" /><path d="M4 4.500H16M4 7.500H16M4 10.500H14M4 13.500H12M4 16.500H10" stroke={W} strokeWidth="1.700" strokeDasharray="2 1.500" /><path d="M23 5L25 7.500L15 17L11 18L13 14Z" stroke={W} strokeWidth="1.300" fill="#5c5c5c" /><path d="M8 18H13V22H8Z" fill={W} /></Svg>,
  rect: <Svg w={22} h={18}><rect x="1" y="1" width="20" height="16" stroke={W} strokeWidth="1.500" /></Svg>,
  boiler: <Svg w={25} h={26}><path d="M1 8H23M3 8V25H14M22 8V15M3 8Q3 4 8 4H17Q22 4 22 8" stroke={W} strokeWidth="1.600" /><path d="M9 4V1.500H15V4" stroke={W} strokeWidth="1.500" /><path d="M.7 12V16M24 11V15" stroke={W} strokeWidth="1.400" /><rect x="15.500" y="17" width="8.500" height="8" stroke={W} strokeWidth="1.300" /><path d="M19.700 17V25M15.500 21H24" stroke={W} strokeWidth="1.300" /></Svg>,
  pump: <Svg w={25} h={26}><path d="M2 14V3Q2 0 5 0H15Q18 0 18 3V24H20V26H12V14Z" fill={W} /><rect x="5.500" y="3" width="9" height="7.500" fill="#5c5c5c" /><path d="M18 14Q21 14 21 18V22Q22.500 25 24 22V7L20 2" stroke={W} strokeWidth="1.500" /><rect x="0" y="14.500" width="11" height="11" fill="#5c5c5c" stroke={W} strokeWidth="1.300" /><path d="M5.500 14.500V25.500M0 20H11" stroke={W} strokeWidth="1.300" /></Svg>,
  pipe: <Svg w={24} h={22}><path d="M0 0H11V4H0ZM2 6H9V13H17V20H5Q2 20 2 17ZM19 11H23V22H19Z" fill={W} /></Svg>,
  pipeB: <Svg w={24} h={22}><path d="M0 0H11V4H0ZM2 6H9V12H12V20H5Q2 20 2 17Z" fill={W} /><path d="M15 21V12H21V21M13 21.500H23M15 14.500H21M15 17H21M15 19.500H21M18 12V21" stroke="#b9b9b9" strokeWidth=".9" /></Svg>,
  linkA: <Svg w={25} h={24}><path d="M16 3H22Q24 3 23.500 6L22.500 9H15.500L14.500 6Q14 3 16 3ZM17 1H21" stroke="#bbb" strokeWidth="1.100" /><circle cx="11.500" cy="12.500" r="2" fill={W} /><path d="M3 14H9V24H3ZM0 16H2V22H0Z" fill={W} /><path d="M4.500 16H7.500" stroke="#5c5c5c" strokeWidth="1.500" /></Svg>,
  linkB: <Svg w={25} h={24}><path d="M17.500 .5H24V9H17.500ZM19.500 2V7M22 2V7" stroke="#d0d0d0" strokeWidth="1.200" /><circle cx="12.500" cy="11.500" r="2.500" fill={W} /><path d="M5 12Q5 15 7 17Q9 20 7.500 22.500Q5 25 2 22.500Q0 19 3 16Q4 14 5 12Z" fill={W} /></Svg>,
  linkC: <Svg w={25} h={24}><path d="M17.500 .5H24V9H17.500ZM19.500 2V7M22 2V7" stroke="#d0d0d0" strokeWidth="1.200" /><circle cx="12.500" cy="11.500" r="2.500" fill={W} /><path d="M0 15H7V25H0Z" fill={W} /><path d="M1.500 17H5.500" stroke="#5c5c5c" strokeWidth="1.500" /><path d="M7 17L9.500 18V23L8 24" stroke={W} /></Svg>,
  doc: <Svg w={21} h={25}><rect x="1" y="1" width="19" height="23" stroke={W} strokeWidth="2" /><path d="M4 7H17M4 12H10M4 16H12M4 19.500H12" stroke={W} strokeWidth="2" /></Svg>,
};

const tools: { icon: string; label: string; h: string; pad: string }[] = [
  { icon: "image", label: "导入图片", h: "h-[40px]", pad: "pl-[5px] gap-[8px]" },
  { icon: "ruler", label: "调整比例", h: "h-[40px]", pad: "pl-[7px] gap-[10px]" },
  { icon: "gridpen", label: "绘制异形建筑", h: "h-[45px]", pad: "pl-[8px] gap-[8px] pt-[5px]" },
  { icon: "rect", label: "绘制矩形建筑", h: "h-[40px]", pad: "pl-[8px] gap-[11px]" },
  { icon: "boiler", label: "添加热源", h: "h-[40px]", pad: "pl-[5px] gap-[9px]" },
  { icon: "pump", label: "添加热力站", h: "h-[40px]", pad: "pl-[5px] gap-[9px]" },
  { icon: "pipe", label: "热源-热力站管道", h: "h-[40px]", pad: "pl-[9px] gap-[8px] tracking-[.2px]" },
  { icon: "pipeB", label: "热源/热力站-建筑管道", h: "h-[40px]", pad: "pl-[9px] gap-[8px] tracking-[.25px]" },
  { icon: "linkA", label: "关联热源 - 热力站", h: "h-[40px]", pad: "pl-[5px] gap-[9px] [word-spacing:1px]" },
  { icon: "linkB", label: "关联热源 - 建筑", h: "h-[40px]", pad: "pl-[5px] gap-[9px] [word-spacing:1px]" },
  { icon: "linkC", label: "关联热力站 - 建筑", h: "h-[40px]", pad: "pl-[5px] gap-[9px] [word-spacing:1px]" },
  { icon: "doc", label: "生成说明书", h: "h-[40px]", pad: "pl-[7px] gap-[11px]" },
];

function ToolPalette() {
  return (
    <div className="flex w-[187px] shrink-0 flex-col">
      <div className="mt-[5px] flex h-[23px] w-[185px] items-center rounded-t bg-[#525252] pl-[6px] text-[12px] text-[#f0f0f0]">
        <Grip />
        <span className="ml-[5px] pt-[2px] tracking-[.3px]">工-具栏</span>
      </div>
      <div className="flex h-[18px] items-center justify-end pr-[5px]"><Svg w={4} h={7}><path d="M4 0V7L0 3.500Z" fill="#fff" /></Svg></div>
      <div className="flex h-[38px] w-[130px] items-center gap-[9px] border-b border-[#8a8a8a] pl-[6px] pt-[4px] text-[13px] text-white">
        <div className="-mt-[4px]">{toolIcons.pen}</div>
        <span className="whitespace-nowrap">详细信息栏</span>
      </div>
      <div className="pt-[3px]">
        {tools.map((t) => (
          <div key={t.label} className={`flex items-center text-[13px] text-white ${t.h} ${t.pad}`}>
            {toolIcons[t.icon]}
            <span className="whitespace-nowrap">{t.label}</span>
          </div>
        ))}
      </div>
      <div className="mt-auto h-[6px] w-[185px] rounded-b border-b border-[#4a4a4a]" />
    </div>
  );
}

/* ---------- property grid ---------- */

type Prop = { k: string; v: string; h: string; kind?: "ro" | "select" };

const groups: { title: string; h: string; rows: Prop[] }[] = [
  {
    title: "UI设置", h: "h-[17px]",
    rows: [
      { k: "楼房轮廓调整", v: "10", h: "h-[20px]" },
      { k: "比例尺(1:xx)", v: "1", h: "h-[21px]" },
      { k: "热源大小调整", v: "0.0025", h: "h-[20px]" },
      { k: "管道比例调整", v: "1", h: "h-[20px]" },
    ],
  },
  {
    title: "数据库", h: "h-[17px]",
    rows: [
      { k: "供暖天数(d)", v: "123", h: "h-[21px]", kind: "ro" },
      { k: "燃气热值(MJ/m3)", v: "38.93", h: "h-[20px]", kind: "ro" },
      { k: "采暖期室外平均温度(℃)", v: "-0.7", h: "h-[20px]", kind: "ro" },
      { k: "采暖期室外温度(℃)", v: "-7.6", h: "h-[20px]", kind: "ro" },
    ],
  },
  {
    title: "用户输入", h: "h-[18px]",
    rows: [
      { k: "省份", v: "北京市", h: "h-[22px]", kind: "select" },
      { k: "城市", v: "北京市", h: "h-[22px]", kind: "select" },
      { k: "地区类型", v: "寒冷", h: "h-[22px]", kind: "select" },
      { k: "室内温度(℃)", v: "18", h: "h-[21px]" },
      { k: "燃气单价(元/m3)", v: "2.5", h: "h-[20px]" },
      { k: "电费单价(元/kW·h)", v: "0.5", h: "h-[20px]" },
    ],
  },
];

function PropRow({ p }: { p: Prop }) {
  return (
    <div className={`ml-[10px] flex border-b border-[#f0f0f0] bg-white text-[12px] text-black ${p.h}`}>
      <div className="flex w-[150px] shrink-0 items-center whitespace-nowrap border-r border-[#f0f0f0] pl-[17px] pt-[2px]">{p.k}</div>
      {p.kind === "select" ? (
        <div className="flex h-[21px] w-[318px] items-center justify-between border border-[#acacac] bg-gradient-to-b from-[#f0f0f0] to-[#e4e4e4] pl-[5px] pr-[6px]">
          <span className="pt-[2px]">{p.v}</span>
          <Svg w={6} h={4}><path d="M.5 .5L3 3L5.500 .5" stroke="#555" strokeWidth="1.300" /></Svg>
        </div>
      ) : (
        <div className={p.kind === "ro" ? "flex items-center pl-[5px] pt-[2px] text-[#808080]" : "flex items-center pl-[4px] pt-[2px]"}>{p.v}</div>
      )}
    </div>
  );
}

function PropertyPanel() {
  return (
    <div className="flex w-[480px] shrink-0 flex-col">
      <div className="mt-[5px] flex h-[24px] items-center rounded-t bg-[#525252] pl-[6px] text-[12px] text-[#f0f0f0]">
        <Grip />
        <span className="ml-[5px] pt-px">属性面板</span>
      </div>
      <div className="flex h-[807px] flex-col border border-[#a6a6a6] bg-white">
        <div className="bg-[#f0f0f0]">
          {groups.map((g) => (
            <div key={g.title}>
              <div className={`flex items-center pl-[6px] text-[12px] font-bold text-black ${g.h}`}>
                <Svg w={6} h={6}><path d="M6 0V6H0Z" fill="#222" /></Svg>
                <span className="ml-[9px] pt-[2px]">{g.title}</span>
              </div>
              {g.rows.map((r) => <PropRow key={r.k} p={r} />)}
            </div>
          ))}
        </div>
        <div className="grow" />
        <div className="h-[4px] border-y border-[#a6a6a6] bg-[#f0f0f0]" />
        <div className="h-[40px] bg-[#5c5c5c]" />
      </div>
      <div className="mt-auto h-[6px] rounded-b border-b border-[#4a4a4a]" />
    </div>
  );
}

const sideTabs = ["基础属性", "楼房属性", "热源属性", "热力站属性", "方案属性", "方案对比"];

function SideTabs() {
  return (
    <div className="flex w-[25px] shrink-0 flex-col pt-[29px]">
      {sideTabs.map((t, i) => (
        <div
          key={t}
          className={
            i === 0
              ? "flex h-[132px] w-[22px] items-center justify-center rounded-r border border-l-0 border-[#333] bg-[#5c5c5c] text-[12px] text-white"
              : "flex h-[131px] w-[22px] items-center justify-center rounded-r border border-t-0 border-[#333] bg-[#515151] text-[12px] text-[#a8a8a8]"
          }
        >
          <span className="rotate-180 whitespace-nowrap leading-none [writing-mode:vertical-rl]">
            <span className="[text-orientation:sideways]">{t}</span>
          </span>
        </div>
      ))}
    </div>
  );
}

/* ---------- drawing area ---------- */

function GridLines() {
  const minor: string[] = [];
  const major: string[] = [];
  for (let i = -3; i < 72; i++) {
    (i % 5 === 0 ? major : minor).push(`M${Math.round(54.2 + i * 16.31) + 0.5} 0V801`);
  }
  for (let i = -3; i < 46; i++) {
    (i % 5 === 0 ? major : minor).push(`M0 ${Math.round(54.4 + i * 16.31) + 0.5}H1228`);
  }
  return (
    <>
      <path d={minor.join("")} stroke="#262d38" />
      <path d={major.join("")} stroke="#30374b" />
    </>
  );
}

function CommandLine() {
  return (
    <div className="absolute left-[430px] top-[773px] flex h-[27px] w-[368px] items-center overflow-hidden rounded-[2px] border border-[#4a4d50] bg-[#bcbec0]">
      <div className="flex h-full w-[53px] items-center bg-gradient-to-b from-[#6e6e6e] to-[#3c3c3c]">
        <div className="ml-[3px]"><Svg w={6} h={18}><path d="M1 0V18M4.500 0V18" stroke="#999" strokeWidth="1.500" strokeDasharray="1.500 1.500" /></Svg></div>
        <div className="ml-[5px]"><Svg w={9} h={9}><path d="M.5 .5L8.500 8.500M8.500 .5L.5 8.500" stroke="#c8c8c8" strokeWidth="2" /></Svg></div>
        <div className="ml-[11px]"><Svg w={15} h={15}><path d="M4 .5L7 3.500V6.500L14.500 12.500L12.500 14.500L6 7.500H3L.5 4L3.500 5L5 3.500Z" fill="#ccd0d6" stroke="#ddd" strokeWidth=".6" /></Svg></div>
      </div>
      <div className="ml-[5px] flex size-[15px] items-center justify-center rounded-[1px] border border-[#6d7f91] bg-[#a9b3bf]">
        <Svg w={11} h={8}><path d="M.5 .5L4 4L.5 7.500" stroke="#3d4956" strokeWidth="1.400" /><path d="M5.500 7.500H10.500" stroke="#3d4956" strokeWidth="1.400" /></Svg>
      </div>
      <div className="ml-[4px]"><Caret c="#666" /></div>
      <span className="ml-[8px] text-[13px] italic text-[#6d7073]">键入命令</span>
      <div className="ml-auto mr-[3px]"><Svg w={7} h={4}><path d="M0 4H7L3.500 0Z" fill="#111" /></Svg></div>
    </div>
  );
}

function ImeBar() {
  return (
    <div className="absolute left-[1085px] top-[691px] flex h-[25px] w-[138px] items-center border border-[#b5b5b5] bg-white text-[15px] text-[#444] shadow-md">
      <div className="h-full w-[13px] border-r border-[#b5b5b5] bg-[#cbcbcb]" />
      <span className="ml-[5px]">英</span>
      <span className="w-[23px] pl-[5px] text-[13px] font-bold tracking-[2px]">'.</span>
      <span className="w-[20px]">半</span>
      <span className="w-[20px]">简</span>
      <span className="w-[20px]">键</span>
      <span>菜</span>
    </div>
  );
}

function Canvas() {
  return (
    <div className="relative h-[801px] w-[1228px] overflow-hidden bg-[#212830]">
      <svg width="1228" height="801" className="block" fill="none">
        <GridLines />
        <path d="M228 409.500H273M279 409.500H325M276.500 361V406M276.500 413V458" stroke="#fff" />
        <rect x="273.500" y="406.500" width="6" height="6" stroke="#fff" />
        <path d="M20.500 730V780.500H71" stroke="#e6e6e6" />
        <rect x="16.500" y="775.500" width="9" height="9" stroke="#e6e6e6" />
        <text x="21.500" y="726" textLength="14" lengthAdjust="spacingAndGlyphs" fontSize="18" fontWeight="300" fontFamily="Lato, sans-serif" fill="#f2f2f2">Y</text>
        <text x="74.500" y="779" textLength="14" lengthAdjust="spacingAndGlyphs" fontSize="18" fontWeight="300" fontFamily="Lato, sans-serif" fill="#f2f2f2">X</text>
      </svg>
      <div className="absolute left-[3px] top-[7px] whitespace-nowrap text-[12px] tracking-[.4px] text-[#e8e8e8]">[−][俯视][二维线框]</div>
      <div className="absolute right-[12px] top-[9px] flex items-end gap-[10px]">
        <Svg w={10} h={10}><path d="M0 8.500H10" stroke="#f0f0f0" strokeWidth="3" /></Svg>
        <Svg w={10} h={10}><path d="M1 3.500H7V9H1Z" stroke="#f0f0f0" strokeWidth="2" /><path d="M3 .5H9.500V7" stroke="#f0f0f0" /></Svg>
        <Svg w={9} h={10}><path d="M1 1.500L8 9M8 1.500L1 9" stroke="#f0f0f0" strokeWidth="2.200" /></Svg>
      </div>
      <ImeBar />
      <CommandLine />
    </div>
  );
}

const CloseX = () => <Svg w={7} h={7}><path d="M.5 .5L6.500 6.500M6.500 .5L.5 6.500" stroke="#a3a3a3" strokeWidth="1.800" /></Svg>;

function SheetTabs() {
  return (
    <div className="flex h-[37px]">
      <div className="mt-[2px] w-[17px] rounded-l bg-[#515151] pl-[2px] pt-[5px]"><Grip /></div>
      <div className="mt-[2px] flex h-[35px] grow flex-col bg-[#696969]">
        <div className="flex h-[25px] items-start border-b border-[#9a9a9a] bg-gradient-to-b from-[#ededed] to-[#cbcbcb] pl-[22px] text-[12px] text-black">
          <div className="relative flex h-[25px] w-[114px] items-center pl-[18px]">
            <svg width="120" height="25" className="absolute left-0 top-0" fill="none"><path d="M0 0Q3 2 6 8L13 20Q15 24 19 24H101Q105 24 108 20L117 3" stroke="#fafafa" strokeWidth="3" /><path d="M0 0Q3 2 6 8L13 20Q15 24 19 24H101Q105 24 108 20L117 3" stroke="#9a9a9a" /></svg>
            <span className="relative pt-[2px]">原图</span>
            <div className="relative ml-auto mr-[8px]"><CloseX /></div>
          </div>
          <div className="relative flex h-[26px] w-[118px] items-center pl-[19px]">
            <svg width="126" height="26" className="absolute left-0 top-0" fill="none"><path d="M0 0Q3 2 6 8L12 20Q14 25 18 25H105Q108 25 110 20L118 5Q121 0 125 0Z" fill="#fff" stroke="#a6a6a6" strokeWidth=".8" /></svg>
            <span className="relative whitespace-nowrap pt-px">建筑轮廓图</span>
            <div className="relative ml-auto mr-[11px]"><CloseX /></div>
          </div>
          <div className="ml-[6px] mt-[7px]"><Svg w={20} h={12}><path d="M.5 .5H16Q18.500 .5 19 3L19.500 11.500H5Q3 11.500 2 9Z" stroke="#9a9a9a" strokeWidth="1.200" /></Svg></div>
        </div>
      </div>
    </div>
  );
}

/* ---------- status bar ---------- */

function ModelTab({ w, label, fill, text, pad }: { w: number; label: string; fill: string; text: string; pad: string }) {
  return (
    <TabShape w={w} h={18} fill={fill} pad={pad} d={`M-6 0Q-1 1 1 7Q3 18 8 18H${w - 8}Q${w - 4} 17 ${w - 2} 7Q${w} 1 ${w + 3} 0Z`}>
      <span className={text}>{label}</span>
    </TabShape>
  );
}

const Person = ({ c, extra }: { c: string; extra?: React.ReactNode }) => (
  <Svg w={16} h={18}><path d="M8 0L10.500 6V9L15.500 16L9.500 14L8 11L6.500 14L.5 16L5.500 9V6Z" fill={c} />{extra}</Svg>
);

const Box = ({ w, children }: { w: string } & Kids) => (
  <div className={`flex h-[26px] shrink-0 items-center border border-[#7d7d7d] bg-[#515151] ${w}`}>{children}</div>
);

function StatusBar() {
  const g = "#c9c9c9";
  return (
    <div className="flex h-[29px] w-full border-t border-[#555] bg-[#373737] text-[12px]">
      <div className="flex grow items-start pl-[13px]">
        <ModelTab w={45} label="模型" fill="url(#modelTab)" text="font-bold text-white" pad="pl-[10px]" />
        <ModelTab w={54} label="布局1" fill="#555" text="text-[#bbb]" pad="pl-[12px]" />
        <ModelTab w={54} label="布局2" fill="#555" text="text-[#bbb]" pad="pl-[12px]" />
        <div className="ml-[5px]"><Svg w={22} h={16}><path d="M6 0H22Q20 15 14 16H0Q5 8 6 0Z" fill="#555" /><path d="M7 8H15M11 4V12" stroke="#ccc" strokeWidth="1.800" /></Svg></div>
      </div>
      <div className="flex gap-px pr-px">
        <Box w="w-[29px]"><span className="pl-[3px] pt-px text-[#f0f0f0]">模型</span></Box>
        <Box w="w-[65px]">
          <Cell cls="ml-px w-[24px]"><Svg w={14} h={14}><path d="M1.500 0V14M5 0V14M9 0V14M12.500 0V14M0 2H14M0 5.500H14M0 9H14M0 12H14" stroke="#2f97ff" strokeWidth="1.400" /></Svg></Cell>
          <Cell cls="w-[24px]"><Svg w={14} h={14}><path d="M0 .5H14M0 3.500H14M0 6.500H14M0 9.500H14M0 12.500H14" stroke="#ccc" strokeDasharray="1 2" /></Svg></Cell>
          <Cell cls="w-[14px]"><Caret s={7} /></Cell>
        </Box>
        <Box w="w-[102px]">
          <Cell cls="w-[25px]"><Svg w={14} h={14}><path d="M1 0V12.500H14M1 7.500H5.500V12.500" stroke={g} strokeWidth="1.300" /></Svg></Cell>
          <Cell cls="w-[23px]"><Svg w={16} h={14}><path d="M12 3A6 6 0 1 0 13 7M7 7H16M7 7L12 2" stroke={g} strokeWidth="1.300" /></Svg></Cell>
          <Cell cls="w-[14px]"><Caret s={7} /></Cell>
          <Cell cls="w-[24px]"><Svg w={18} h={19}><path d="M1 1L18 18M9 0V19" stroke={g} strokeWidth="1.200" /></Svg></Cell>
          <Cell cls="w-[14px]"><Caret s={7} /></Cell>
        </Box>
        <Box w="-ml-px w-[65px]">
          <Cell cls="w-[25px]"><Svg w={16} h={14}><path d="M0 13H16M1 12L12 1" stroke={g} strokeWidth="1.300" /><path d="M4 6L8 10L9 5Z" fill={g} /></Svg></Cell>
          <Cell cls="w-[24px]"><Svg w={15} h={15}><rect x="1.500" y="1.500" width="12" height="13" stroke="#2f97ff" strokeWidth="1.600" /><rect x="0" y="0" width="4.500" height="4.500" fill="#0c0" stroke="#030" /></Svg></Cell>
          <Cell cls="w-[14px]"><Caret s={7} /></Cell>
        </Box>
        <Box w="w-[107px]">
          <Cell cls="w-[24px]"><Person c="#2f97ff" extra={<circle cx="12.500" cy="4" r="2.500" stroke="#2f97ff" />} /></Cell>
          <Cell cls="w-[24px]"><Person c={g} extra={<path d="M14 0L11 4H14L12 8" stroke={g} />} /></Cell>
          <Cell cls="w-[24px]"><Person c={g} /></Cell>
          <span className="w-[18px] whitespace-nowrap pl-[4px] text-[11.500px] tracking-[-.4px] text-white">1:1</span>
          <Cell cls="w-[14px]"><Caret s={7} /></Cell>
        </Box>
        <Box w="w-[40px]">
          <Cell cls="w-[24px]"><Svg w={14} h={14}><circle cx="7" cy="7" r="3.700" stroke={g} strokeWidth="3" /><circle cx="7" cy="7" r="5.600" stroke={g} strokeWidth="1.600" strokeDasharray="2.200 2.200" /></Svg></Cell>
          <Cell cls="w-[16px]"><Caret s={7} /></Cell>
        </Box>
        <Box w="-ml-px w-[27px]"><Cell cls="w-[25px]"><Svg w={14} h={14}><path d="M0 7H14M7 0V14" stroke={g} strokeWidth="1.700" /></Svg></Cell></Box>
        <Box w="w-[26px]"><Cell cls="w-[24px]"><Svg w={15} h={15}><path d="M.5 1H6V7H.5ZM4 14L7 9.500L10 14Z" stroke={g} strokeWidth="1.200" /><circle cx="11.500" cy="6.500" r="3" stroke={g} strokeWidth="1.200" /></Svg></Cell></Box>
        <Box w="w-[26px]"><Cell cls="w-[24px]"><Svg w={16} h={16}><circle cx="8" cy="8" r="7.500" fill="#0b4f9c" stroke="#2f97ff" strokeWidth="1.400" /><path d="M8 11L12 7" stroke="#2f97ff" strokeWidth="1.400" /></Svg></Cell></Box>
        <Box w="w-[50px]">
          <Cell cls="w-[24px]"><Svg w={16} h={12}><rect x=".7" y=".7" width="14.600" height="10.600" stroke={g} strokeWidth="1.300" /><path d="M9 5L12 3M12.500 6V2.500H9M7 7L4 9M3.500 6V9.500H7" stroke={g} strokeWidth="1.300" /></Svg></Cell>
          <Cell cls="w-[24px]"><Svg w={15} h={12}><path d="M0 1H15M0 6H15M0 11H15" stroke={g} strokeWidth="1.700" /></Svg></Cell>
        </Box>
      </div>
    </div>
  );
}

/* ---------- taskbar ---------- */

const Penguin = ({ badge = false }: { badge?: boolean }) => (
  <Svg w={14} h={16}>
    <path d="M1 14Q-.5 7 4 6H10Q14.500 7 13 14L11 10H3Z" fill="#111" />
    <ellipse cx="7" cy="10.800" rx="5" ry="4.500" fill="#fff" />
    <circle cx="7" cy="4" r="4" fill="#111" stroke="#444" strokeWidth=".4" /><circle cx="5.500" cy="3" r="1.300" fill="#fff" /><circle cx="8.500" cy="3" r="1.300" fill="#fff" /><path d="M4.500 5.200H9.500L7 6.500Z" fill="#f5a623" />
    <path d="M2 7Q7 9.500 12 7L12.500 9Q7 11.500 5 10.300V12.500H3V10Z" fill="#e0261c" /><path d="M1 15H6.500M7.500 15H13" stroke="#f5a623" strokeWidth="2" />
    {badge && <><circle cx="11" cy="11.500" r="4" fill="#f5a93a" stroke="#fff" strokeWidth=".6" /><path d="M9 11.500H13" stroke="#fff" strokeWidth="1.300" /></>}
  </Svg>
);

function AppSlot({ cls, line, children }: { cls: string; line: string } & Kids) {
  return (
    <div className={`flex h-full shrink-0 flex-col items-center ${cls}`}>
      <div className="flex h-[38px] items-center">{children}</div>
      <div className={`h-[2px] bg-[#76b9ed] ${line}`} />
    </div>
  );
}

function Taskbar() {
  return (
    <div className="flex h-[40px] w-full items-center bg-[#1e1e1b] text-white">
      <Cell cls="w-[48px] bg-[#11120f]"><Svg w={16} h={16}><path d="M0 2.300L6.600 1.400V7.600H0ZM7.400 1.300L16 0V7.600H7.400ZM0 8.400H6.600V14.600L0 13.700ZM7.400 8.400H16V16L7.400 14.700Z" fill="#fff" /></Svg></Cell>
      <div className="flex h-full w-[344px] items-center bg-[#333] pl-[9px] pt-[2px] text-[14.700px] tracking-[-.1px] text-[#a6a6a6]">搜索 Web 和 Windows</div>
      <Cell cls="w-[48px]"><Svg w={20} h={14}><rect x="4.500" y=".5" width="11" height="13" stroke="#fff" strokeWidth="1.200" /><path d="M3 2.500H.5V11.500H3M17 2.500H19.500V11.500H17" stroke="#fff" strokeWidth="1.200" /></Svg></Cell>
      <AppSlot cls="ml-[1px] w-[50px]" line="w-[40px]">
        <Svg w={22} h={22}><circle cx="11" cy="11" r="11" fill="#db4437" /><path d="M1.500 5.500A11 11 0 0 0 11 22L15.800 13.800L11 11L6.200 13.800Z" fill="#0f9d58" /><path d="M11 22A11 11 0 0 0 20.500 5.500H11L15.800 13.800Z" fill="#ffcd40" /><circle cx="11" cy="11" r="5" fill="#f1f1f1" /><circle cx="11" cy="11" r="4" fill="#4285f4" /></Svg>
      </AppSlot>
      <AppSlot cls="w-[48px]" line="w-[40px]">
        <Svg w={23} h={23}><path d="M0 3L16 0L23 3V21L16 23H0Z" fill="#68217a" /><path d="M1.500 7.500L4 6.500L9.500 11L16.500 3L20.500 4.500V18.500L16.500 20L9.500 13L4 17L1.500 16ZM16 8.500L12.500 11.700L16 15ZM3.500 9.500V14L6 11.700Z" fill="#fff" fillRule="evenodd" /></Svg>
      </AppSlot>
      <AppSlot cls="ml-px w-[48px] bg-[#4a4b4a]" line="w-[48px]">
        <div className="flex h-6 w-6 items-center justify-center bg-gradient-to-b from-[#f8e4e4] to-[#e02a35]"><AutocadA s={17} /></div>
      </AppSlot>
      <AppSlot cls="w-[50px]" line="w-[40px]">
        <Svg w={22} h={18}><path d="M0 0H8L10 2H20V16H0Z" fill="#f0c04a" /><path d="M1 4H22V18H1Z" fill="#ffe28a" /><path d="M4 18V11Q4 9.500 5.500 9.500H17Q18.500 9.500 18.500 11V18H14V14H8.500V18Z" fill="#29b6ea" /></Svg>
      </AppSlot>
      <div className="grow" />
      <Cell cls="w-[24px]"><Svg w={12} h={7}><path d="M.5 6.500L6 1L11.500 6.500" stroke="#fff" strokeWidth="1.300" /></Svg></Cell>
      <Cell cls="w-[24px]"><Penguin badge /></Cell>
      <Cell cls="w-[24px]"><Penguin /></Cell>
      <Cell cls="w-[24px]"><Svg w={15} h={12}><path d="M0 12V6L2.500 4H4.500L6 1.500H9L10.500 4H12.500L15 6V12H12V7.500L10.500 9V12H9V8H6V12H4.500V9L3 7.500V12Z" fill="#fff" /></Svg></Cell>
      <Cell cls="w-[24px]"><Svg w={16} h={14}><path d="M5 1.500H15.500V10.500H3.500V6M9.500 10.500V13M6 13.300H13M.5 .5H4.500V5H.5Z" stroke="#fff" /></Svg></Cell>
      <Cell cls="w-[24px]"><Svg w={17} h={14}><path d="M.5 4.500H3L7 1V13L3 9.500H.5Z" stroke="#fff" /><path d="M9 5Q10.500 7 9 9M11 3Q14 7 11 11" stroke="#ddd" /><path d="M13.500 1Q17.500 7 13.500 13" stroke="#777" /></Svg></Cell>
      <Cell cls="w-[24px]"><Svg w={16} h={16}><path d="M0 0H16V13H11L8 16V13H0Z" fill="#fff" /><path d="M3 3.500H13M3 6.500H13M3 9.500H9" stroke="#1e1e1b" strokeWidth="1.300" /></Svg></Cell>
      <Cell cls="w-[24px] text-[13px] font-medium">英</Cell>
      <Cell cls="w-[33px]">
        <div className="flex h-[15px] w-[15px] -rotate-6 items-center justify-center rounded-[3px] bg-[#f4511e] text-[14px] font-bold leading-none text-white">S</div>
      </Cell>
      <div className="ml-[2px] w-[75px] pt-px text-center text-[12px] leading-[17px] text-[#f0f0f0]">
        <div>10:12</div>
        <div className="tracking-[.1px]">2016/6/24</div>
      </div>
      <div className="h-full w-px bg-[#555]" />
      <div className="w-[4px]" />
    </div>
  );
}

/* ---------- window ---------- */

export default function App() {
  return (
    <div className="relative flex h-[1080px] w-[1920px] flex-col overflow-hidden bg-[#5c5c5c] font-['Noto_Sans','Noto_Sans_CJK_SC',sans-serif] leading-[1.2] select-none">
      <Gradients />
      <TitleBar />
      <RibbonTabs />
      <Ribbon />
      <FileTabs />
      <div className="flex h-[842px] w-full bg-[#5c5c5c] pt-px">
        <ToolPalette />
        <PropertyPanel />
        <SideTabs />
        <div className="flex w-[1228px] flex-col pt-[3px]">
          <Canvas />
          <SheetTabs />
        </div>
      </div>
      <StatusBar />
      <Taskbar />
      <div className="absolute left-0 top-0 flex h-[41px] w-[41px] items-center border border-black bg-gradient-to-b from-[#b5b5b5] to-[#5a5a5a] pb-[4px] pl-[3px] shadow-[inset_0_0_0_1px_#8a8a8a]">
        <AutocadA s={24} />
        <div className="ml-[3px] mt-[2px]"><Caret s={7} c="#222c38" /></div>
      </div>
    </div>
  );
}
